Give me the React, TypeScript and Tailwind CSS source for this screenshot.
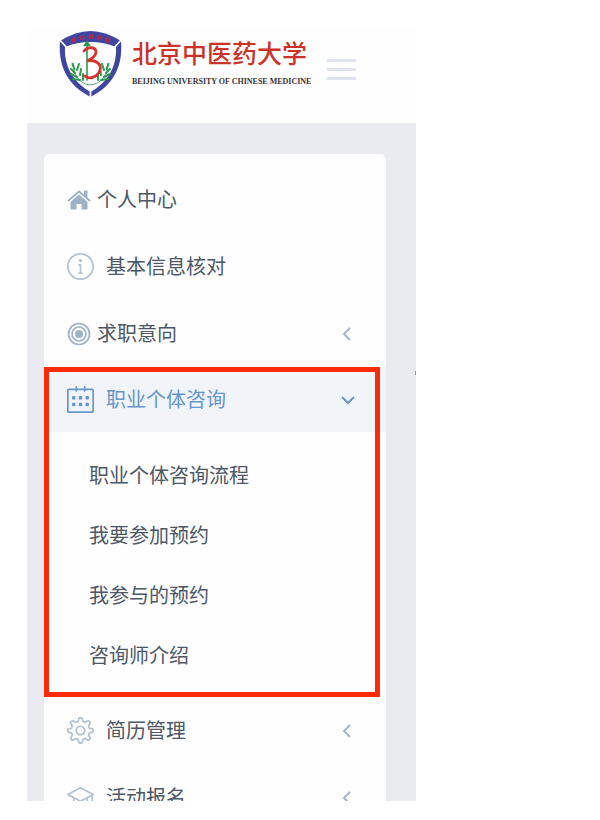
import { useState } from "react";
import type { ReactNode } from "react";
import { SlCalender, SlGraduation, SlInfo, SlSettings } from "react-icons/sl";

const counselingLinks = ["职业个体咨询流程", "我要参加预约", "我参与的预约", "咨询师介绍"];

function Shield() {
  return (
    <svg viewBox="0 0 63 68" className="h-[68px] w-[63px] shrink-0" aria-hidden="true">
      <path
        d="M1 11Q17 1 31.500 1Q46 1 62 11C64 36 55 55 31.500 67C8 55 -1 36 1 11Z"
        fill="#3f469f"
      />
      <path
        d="M6 17Q18 12 31.500 12Q45 12 57 17C58 36 49 52 31.500 62C14 52 5 36 6 17Z"
        fill="#fff"
      />
      <path d="M0 9L8 18M63 9L55 18M31.500 60V68" stroke="#fff" strokeWidth="1.800" />
      {/* red marks on the top band */}
      <path
        d="M13 8v5M15.500 7v5M22 6v4M24.500 5v5M31 4v5M33.500 4v5M39.500 5v5M42 6v4M47 7v5M50 8v5"
        stroke="#b32b4b"
        strokeWidth="1.800"
      />
      {/* laurel */}
      <g fill="none" stroke="#2c9a4e" strokeLinecap="round">
        <path d="M14 33C14 45 21 54 31 55C42 54 49 45 49 33" strokeWidth="0.800" />
        <path
          d="M15.500 39l-2-5M16 43l-4-4M18 47l-6-3M21 50l-7-1M18 40l2-6M21 45l1-6M24 50l0-6"
          strokeWidth="2"
        />
        <path
          d="M47.500 39l2-5M47 43l4-4M45 47l6-3M42 50l7-1M45 40l-2-6M42 45l-1-6M39 50l0-6"
          strokeWidth="2"
        />
        <path d="M28 14V50" strokeWidth="1.600" />
        <path d="M26 15l2-3 2 3Z" strokeWidth="2" />
      </g>
      <path
        d="M25 21C29 16 37 17 37 22C37 27 32 29 28 31C36 29 43 34 41 40C39 47 30 50 26 46"
        fill="none"
        stroke="#d8342f"
        strokeWidth="2.800"
        strokeLinecap="round"
      />
    </svg>
  );
}

function HomeIcon() {
  return (
    <svg viewBox="0 0 24 20" className="h-5 w-6" aria-hidden="true">
      <path d="M1 11L12 1.500L23 11" fill="none" stroke="currentColor" strokeWidth="1.800" />
      <path d="M17 0.500h3.500V8L17 5Z" fill="currentColor" />
      <path d="M12 4.500L20.500 12v6.500q0 1-1 1H14.500V14h-5v5.500H4.500q-1 0-1-1V12Z" fill="currentColor" />
    </svg>
  );
}

function TargetIcon() {
  return (
    <svg viewBox="0 0 24 24" className="size-6" fill="none" stroke="currentColor" aria-hidden="true">
      <circle cx="12" cy="12" r="10.500" strokeWidth="1.700" />
      <circle cx="12" cy="12" r="7" strokeWidth="1.700" />
      <circle cx="12" cy="12" r="4" fill="currentColor" stroke="none" />
    </svg>
  );
}

function Chevron({ open = false }: { open?: boolean }) {
  return (
    <svg
      viewBox="0 0 16 16"
      className="size-4"
      fill="none"
      stroke="currentColor"
      strokeWidth="2"
      aria-hidden="true"
    >
      <path d={open ? "M2 5L8 11L14 5" : "M11 2L5 8L11 14"} />
    </svg>
  );
}

type RowProps = {
  icon: ReactNode;
  label: string;
  wide?: boolean;
};

function RowContent({ icon, label, wide }: RowProps) {
  return (
    <span className={wide ? "flex items-center gap-3" : "flex items-center gap-1.5"}>
      <span className={wide ? "text-[#b1c2d2]" : "text-[#9db2c7]"}>{icon}</span>
      <span>{label}</span>
    </span>
  );
}

function RowLink(props: RowProps) {
  return (
    <li>
      <a href="#" className="flex h-[67px] items-center px-[23px]">
        <RowContent {...props} />
      </a>
    </li>
  );
}

function RowButton(props: RowProps) {
  return (
    <button type="button" className="flex h-[67px] w-full items-center justify-between pr-[31px] pl-[23px]">
      <RowContent {...props} />
      <span className="text-[#a3b6c9]">
        <Chevron />
      </span>
    </button>
  );
}

export default function App() {
  const [open, setOpen] = useState(true);

  return (
    <div className="min-h-screen bg-white pt-[27px] pl-[27px] font-['Liberation_Sans','Noto_Sans_CJK_SC',sans-serif]">
      <div className="w-full max-w-[389px] bg-[#e9ebf1]">
        <header className="flex h-24 items-start bg-[#fefefe] pt-[3px] pl-8">
          <a href="#" className="flex items-start gap-2.5">
            <Shield />
            <span className="flex flex-col pt-1 whitespace-nowrap">
              <span className="text-[25px] leading-10 font-medium text-[#cb3329]">北京中医药大学</span>
              <span className="pt-0.5 font-['Liberation_Serif',serif] text-[8px] leading-3 font-bold text-[#3a3434]">
                BEIJING UNIVERSITY OF CHINESE MEDICINE
              </span>
            </span>
          </a>
          <button type="button" aria-label="菜单" className="mt-[29px] ml-4 flex w-[29px] flex-col gap-1.5">
            <span className="h-[3px] bg-[#dfe3ed]" />
            <span className="h-[3px] bg-[#dfe3ed]" />
            <span className="h-[3px] bg-[#dfe3ed]" />
          </button>
        </header>

        <nav className="mt-[31px] mr-[30px] ml-[17px] rounded-t-md bg-[#fefefe] pt-3 text-xl text-[#4c5866]">
          <ul>
            <RowLink icon={<HomeIcon />} label="个人中心" />
            <RowLink icon={<SlInfo className="size-[27px]" />} label="基本信息核对" wide />
            <li>
              <RowButton icon={<TargetIcon />} label="求职意向" />
            </li>
            <li className="relative">
              <button
                type="button"
                aria-expanded={open}
                onClick={() => setOpen(!open)}
                className="flex h-[65px] w-full items-center justify-between bg-[#f1f4f8] pr-[30px] pl-[23px] text-[#6696cd]"
              >
                <span className="flex items-center gap-3">
                  <SlCalender className="size-[27px]" />
                  <span>职业个体咨询</span>
                </span>
                <Chevron open={open} />
              </button>
              {open && (
                <ul className="pt-3.5 pb-[11px]">
                  {counselingLinks.map((label) => (
                    <li key={label}>
                      <a href="#" className="flex h-15 items-center pl-[45px]">
                        {label}
                      </a>
                    </li>
                  ))}
                </ul>
              )}
              {/* highlight frame over the whole group */}
              <div className="pointer-events-none absolute inset-y-0 right-1.5 left-0 border-5 border-[#fb2a0b]" />
              <div className="absolute top-1 -right-[30px] h-1 w-px bg-[#e8737a]" />
            </li>
            <li>
              <RowButton icon={<SlSettings className="size-[27px]" />} label="简历管理" wide />
            </li>
            {/* last row is cut off by the bottom of the panel */}
            <li className="h-[37px] overflow-hidden">
              <RowButton icon={<SlGraduation className="size-[27px]" />} label="活动报名" wide />
            </li>
          </ul>
        </nav>
      </div>
    </div>
  );
}
